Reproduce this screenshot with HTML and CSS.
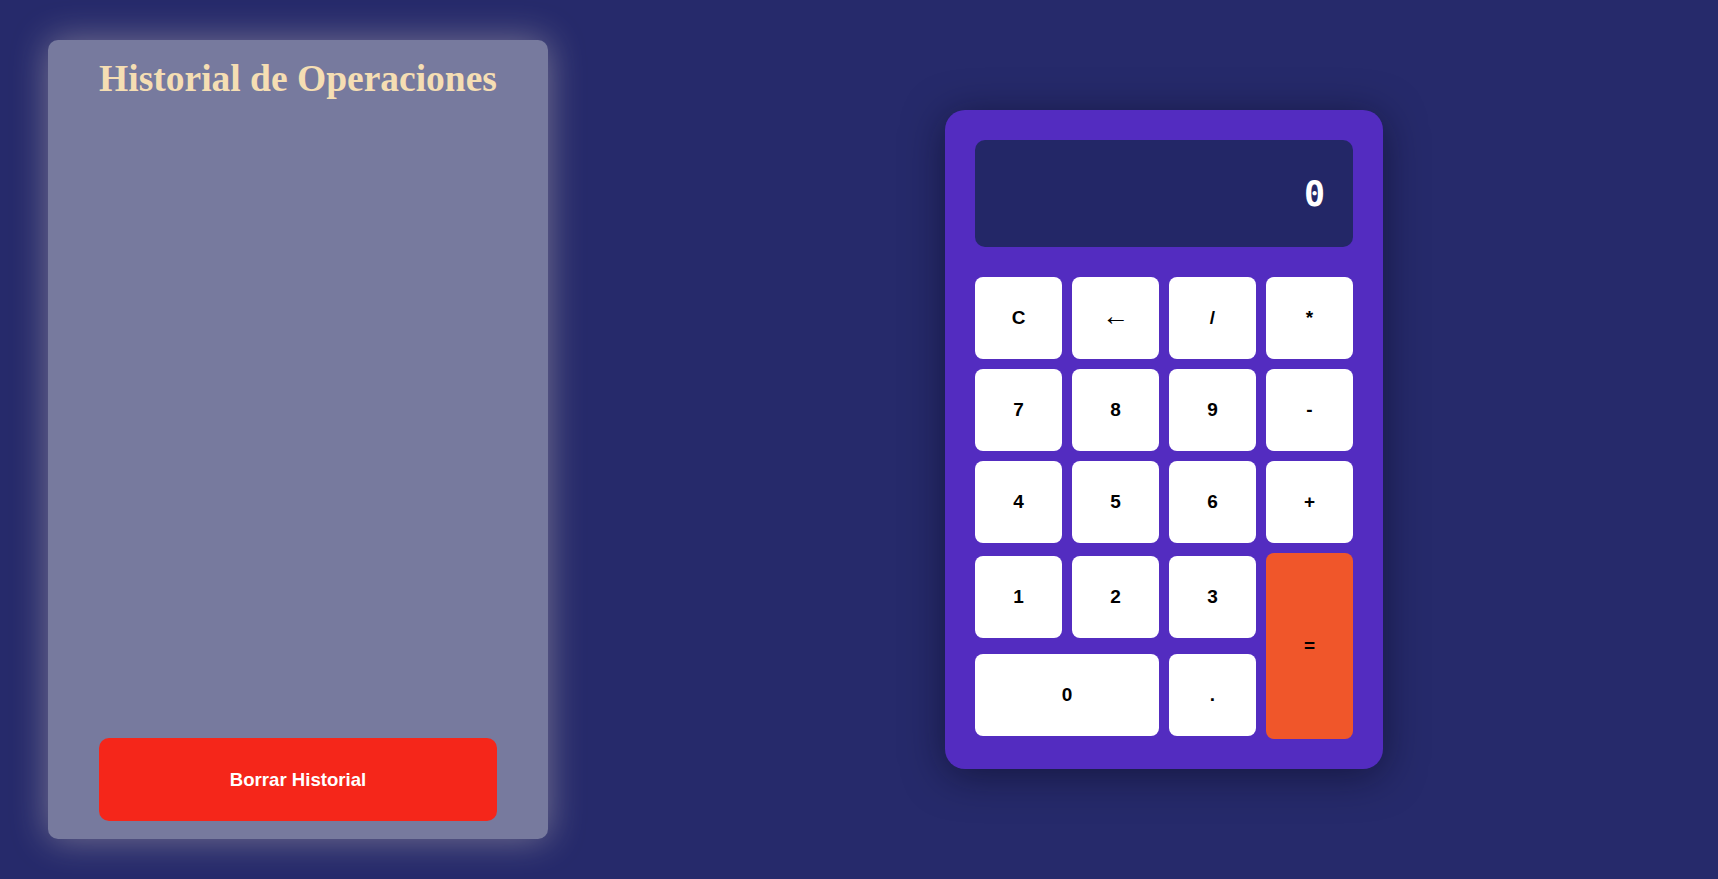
FILE: index.html
```html
<!DOCTYPE html>
<html lang="es">
<head>
<meta charset="utf-8">
<title>Calculadora</title>
<link rel="stylesheet" href="styles.css">
</head>
<body>
  <aside class="history">
    <h1 class="history-title">Historial de Operaciones</h1>
    <ul class="history-list"></ul>
    <button class="clear-btn">Borrar Historial</button>
  </aside>
  <main class="main">
    <div class="calculator">
      <div class="display">0</div>
      <div class="keys">
        <button class="key">C</button>
        <button class="key key-arrow">←</button>
        <button class="key">/</button>
        <button class="key">*</button>
        <button class="key">7</button>
        <button class="key">8</button>
        <button class="key">9</button>
        <button class="key">-</button>
        <button class="key">4</button>
        <button class="key">5</button>
        <button class="key">6</button>
        <button class="key">+</button>
        <button class="key">1</button>
        <button class="key">2</button>
        <button class="key">3</button>
        <button class="key key-equals">=</button>
        <button class="key key-zero">0</button>
        <button class="key">.</button>
      </div>
    </div>
  </main>
</body>
</html>
```
FILE: styles.css
```css
* { box-sizing: border-box; }

html, body { height: 100%; }

body {
  margin: 0;
  background: #262a6b;
  display: flex;
  padding: 40px 0 40px 48px;
  font-family: "Liberation Sans", Arial, sans-serif;
  overflow: hidden;
}

.history {
  width: 500px;
  flex: none;
  background: #777a9e;
  border-radius: 10px;
  box-shadow: 0 0 36px rgba(255, 238, 210, 0.38);
  display: flex;
  flex-direction: column;
  padding: 17px 51px 18px;
}

.history-title {
  margin: 0;
  text-align: center;
  font-family: "Liberation Serif", "Times New Roman", serif;
  font-weight: bold;
  font-size: 37.5px;
  color: #f5deb3;
  white-space: nowrap;
}

.history-list {
  flex: 1;
  margin: 0;
  padding: 0;
  list-style: none;
}

.clear-btn {
  height: 83px;
  border: none;
  border-radius: 10px;
  background: #f5261a;
  color: #fff;
  font-family: "Liberation Sans", Arial, sans-serif;
  font-weight: bold;
  font-size: 18.6px;
}

.main {
  flex: 1;
  display: flex;
  align-items: center;
  justify-content: center;
  padding-left: 62px;
}

.calculator {
  width: 438px;
  background: #532cc0;
  border-radius: 20px;
  padding: 30px;
  box-shadow: 0 6px 40px rgba(10, 10, 30, 0.55);
}

.display {
  height: 107px;
  background: #232767;
  border-radius: 10px;
  margin-bottom: 30px;
  display: flex;
  align-items: center;
  justify-content: flex-end;
  padding-right: 28px;
  color: #fff;
  font-family: "DejaVu Sans Mono", "Liberation Mono", monospace;
  font-weight: bold;
  font-size: 35px;
}

.keys {
  display: grid;
  grid-template-columns: repeat(4, 1fr);
  grid-template-rows: 82px 82px 82px 88px 88px;
  gap: 10px;
  align-items: center;
}

.key {
  height: 82px;
  border: none;
  border-radius: 8px;
  background: #fff;
  color: #000;
  font-family: "Liberation Sans", Arial, sans-serif;
  font-weight: bold;
  font-size: 19px;
  padding: 0;
}

.key-arrow {
  font-family: "Liberation Serif", "Times New Roman", serif;
  font-weight: normal;
  font-size: 27px;
  padding-bottom: 3px;
}

.key-equals {
  grid-column: 4;
  grid-row: 4 / span 2;
  height: 100%;
  align-self: stretch;
  background: #f0562a;
}

.key-zero {
  grid-column: span 2;
}
```
